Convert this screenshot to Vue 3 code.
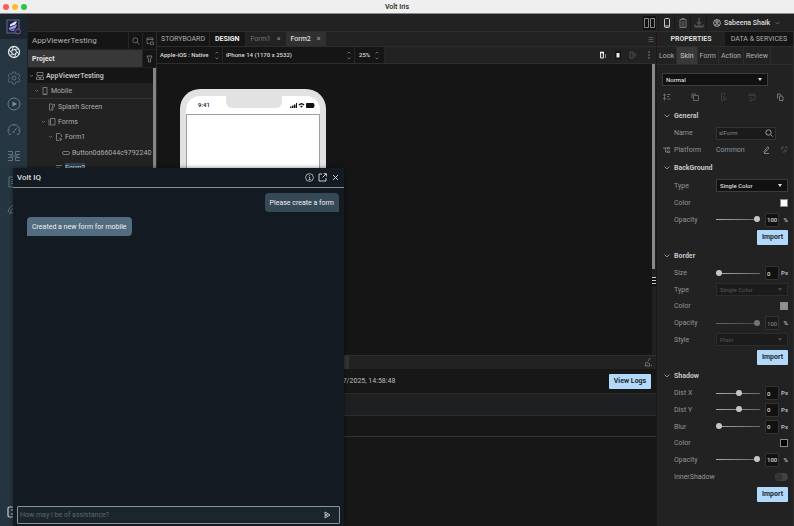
<script setup>
import { ref, reactive } from 'vue'

const railIcons = ['aperture', 'gear', 'play', 'gauge', 'flow', 'doc', 'build']

const tree = [
  { label: 'AppViewerTesting', level: 0, icon: 'app', open: true, root: true },
  { label: 'Mobile', level: 1, icon: 'phone', open: true, line: true },
  { label: 'Splash Screen', level: 2, icon: 'splash' },
  { label: 'Forms', level: 2, icon: 'forms', open: true },
  { label: 'Form1', level: 3, icon: 'form', open: true },
  { label: 'Button0d66044c9792240', level: 4, icon: 'button' },
  { label: 'Form2', level: 3, icon: 'lines', selected: true },
]

const panelTabs = ['Look', 'Skin', 'Form', 'Action', 'Review']
const activeTab = ref('Skin')

const sections = reactive([
  {
    title: 'BackGround', size: 'three', rows: [
      { label: 'Type', kind: 'select', value: 'Single Color' },
      { label: 'Color', kind: 'color', value: '#ffffff' },
      { label: 'Opacity', kind: 'range', pos: 100, value: '100', unit: '%' },
    ],
  },
  {
    title: 'Border', size: 'five', rows: [
      { label: 'Size', kind: 'range', pos: 0, value: '0', unit: 'Px' },
      { label: 'Type', kind: 'select', value: 'Single Color', disabled: true },
      { label: 'Color', kind: 'color', value: '#919191' },
      { label: 'Opacity', kind: 'range', pos: 100, value: '100', unit: '%', disabled: true },
      { label: 'Style', kind: 'select', value: 'Plain', disabled: true },
    ],
  },
  {
    title: 'Shadow', size: 'six', rows: [
      { label: 'Dist X', kind: 'range', pos: 53, value: '0', unit: 'Px' },
      { label: 'Dist Y', kind: 'range', pos: 53, value: '0', unit: 'Px' },
      { label: 'Blur', kind: 'range', pos: 0, value: '0', unit: 'Px' },
      { label: 'Color', kind: 'color', value: '#000000' },
      { label: 'Opacity', kind: 'range', pos: 100, value: '100', unit: '%' },
      { label: 'InnerShadow', kind: 'toggle', value: false },
    ],
  },
])

const skinName = ref('slForm')
const message = ref('')
</script>

<template>
  <div class="window">
    <header class="titlebar">
      <div class="lights"><i class="red"></i><i class="yellow"></i><i class="green"></i></div>
      <h1>Volt Iris</h1>
    </header>

    <div class="body">
      <nav class="rail">
        <div class="brand">
          <svg width="15" height="16" viewBox="0 0 15 16" fill="none">
            <rect x="1" y="1" width="12" height="13" fill="#1f2440" stroke="#67698f" />
            <path d="M4 5.500L9 2.500H11L9.500 5.500L4 7.500Z" fill="#e0dcff" />
            <path d="M3 9L11 5.500L9.500 9L3.500 11Z" fill="#a99cf0" />
            <path d="M4 12L9 9.500L8 12Z" fill="#7e83d8" />
            <circle cx="12" cy="12.500" r="2.500" fill="#29253c" stroke="#7a569f" />
          </svg>
        </div>
        <button v-for="icon in railIcons" :key="icon" :class="['rail-btn', icon]" type="button" :aria-label="icon">
          <svg width="14" height="14" viewBox="0 0 14 14" fill="none" stroke="currentColor">
            <template v-if="icon === 'aperture'">
              <circle cx="7" cy="7" r="5.500" stroke-width="1.300" />
              <path d="M7 4.500L9.200 5.700V8.300L7 9.500L4.800 8.300V5.700ZM7 4.500L11.500 3.800M9.200 5.700L12 9.500M9.200 8.300L7.500 12.500M7 9.500L2.500 10.200M4.800 8.300L2 4.500M4.800 5.700L6.500 1.500" />
            </template>
            <template v-else-if="icon === 'gear'">
              <circle cx="7" cy="7" r="2" />
              <path d="M5.700 1H8.300L8.700 2.700L10.200 3.400L11.600 2.500L13 5L11.700 6.300V7.700L13 9L11.600 11.500L10.200 10.600L8.700 11.300L8.300 13H5.700L5.300 11.300L3.800 10.600L2.400 11.500L1 9L2.300 7.700V6.300L1 5L2.400 2.500L3.800 3.400L5.300 2.700Z" stroke-width=".8" />
            </template>
            <template v-else-if="icon === 'play'">
              <circle cx="7" cy="7" r="6" stroke-width=".8" />
              <path d="M5.500 4.500L10 7L5.500 9.500Z" fill="currentColor" stroke="none" />
            </template>
            <template v-else-if="icon === 'gauge'">
              <path d="M3 12A6 6 0 1 1 11 12M3 12L4 10.500M11 12L10 10.500M7 8.500L10 4.500M1.500 7H3M11 7H12.500M7 1.500V3" />
              <circle cx="6.500" cy="9" r="1" fill="currentColor" stroke="none" />
            </template>
            <template v-else-if="icon === 'flow'">
              <path d="M1 2.500H5.500V5.500H1M13 2.500H8.500V5.500H13M1 11.500H5.500V8.500H1M13 11.500H8.500V8.500H13M3 7H11" />
            </template>
            <template v-else-if="icon === 'doc'">
              <path d="M2 2H10V12H2ZM4 4.500H8M4 6.500H8M4 8.500H8M11.500 4V12" />
            </template>
            <template v-else>
              <path d="M1 11C3 5 6 3 12 3M3 12C4 8 7 6 11 6M2 12H11M6 8L9 11" />
            </template>
          </svg>
        </button>
        <button class="rail-btn last" type="button" aria-label="Assistant">
          <svg width="13" height="12" viewBox="0 0 13 12" fill="none" stroke="#c5cdd3" stroke-width="1.200">
            <rect x="1" y="1" width="11" height="10" rx="1.500" /><path d="M4 4H7M4 8H7" />
          </svg>
        </button>
      </nav>

      <div class="shell">
        <div class="topbar">
          <button type="button" class="split" aria-label="Split view">
            <svg width="11" height="10" viewBox="0 0 11 10" fill="none" stroke="#a5a5a5"><path d="M.5 .5H4.500V9.500H.5ZM6.500 .5H10.500V9.500H6.500Z" stroke-width=".8" /></svg>
          </button>
          <button type="button" class="tool" aria-label="Device">
            <svg width="8" height="12" viewBox="0 0 8 12"><rect x="1.500" y="1.500" width="5" height="9" rx="1" fill="none" stroke="#c9c9c9" /><path d="M1.500 9H6.500" stroke="#c9c9c9" /></svg>
          </button>
          <button type="button" class="tool" aria-label="Tasks">
            <svg width="8" height="10" viewBox="0 0 8 10" fill="none" stroke="#888" stroke-width=".8"><path d="M1 1.500H7V9.500H1ZM2.500 .5H5.500M2.500 4H5.500M2.500 6H5.500M2.500 8H5.500" /></svg>
          </button>
          <button type="button" class="tool" aria-label="Download">
            <svg width="10" height="10" viewBox="0 0 10 10" fill="none" stroke="#656565"><path d="M5 0V6M3 4L5 6.500L7 4M1 6.500V9H9V6.500M2.500 8H7.500" /></svg>
          </button>
          <button type="button" class="user">
            <svg width="8" height="8" viewBox="0 0 8 8" fill="none" stroke="#ccc" stroke-width=".8"><circle cx="4" cy="4" r="3.400" /><circle cx="4" cy="3" r="1.200" /><path d="M2 6.500C2.300 4.500 5.700 4.500 6 6.500" /></svg>
            <span>Sabeena Shaik</span>
            <svg width="5" height="4" viewBox="0 0 5 4" fill="none" stroke="#777" stroke-width=".8"><path d="M.5 1L2.500 3L4.500 1" /></svg>
          </button>
        </div>

        <div class="workspace">
          <aside class="explorer">
            <div class="exp-row">
              <span class="app-name">AppViewerTesting</span>
              <button type="button" aria-label="Search"><svg width="8" height="8" viewBox="0 0 8 8" fill="none" stroke="#777"><circle cx="3.300" cy="3.300" r="2.500" stroke-width=".8" /><path d="M5.200 5.200L7.500 7.500" stroke-width=".8" /></svg></button>
              <button type="button" aria-label="Add panel"><svg width="8" height="8" viewBox="0 0 8 8" fill="none" stroke="#777" stroke-width=".8"><path d="M7 3.500V1H1V6.500H3.500M1 2.500H7M4.500 5H7.500V7.500H4.500Z" /></svg></button>
            </div>
            <div class="exp-row project">
              <strong>Project</strong>
              <button type="button" aria-label="Filter"><svg width="7" height="8" viewBox="0 0 7 8" fill="none" stroke="#888" stroke-width=".8"><path d="M1 1H6L4.500 4V7H2.500V4Z" /></svg></button>
            </div>
            <ul class="tree">
              <li v-for="node in tree" :key="node.label" :class="['level' + node.level, { root: node.root, line: node.line, selected: node.selected }]">
                <svg class="caret" width="5" height="4" viewBox="0 0 5 4" fill="none" stroke="#777" stroke-width=".8"><path v-if="node.open" d="M1 1L2.500 2.500L4 1" /></svg>
                <svg class="node-icon" width="8" height="8" viewBox="0 0 8 8" fill="none" stroke="#8a8a8a" stroke-width=".8">
                  <path v-if="node.icon === 'app'" d="M1 .5H7V3.500H1ZM.5 5H3.500V7.500H.5ZM4.500 5H7.500V7.500H4.500Z" />
                  <path v-else-if="node.icon === 'phone'" d="M2 .5H6V7.500H2ZM3.500 6.500H4.500" />
                  <path v-else-if="node.icon === 'splash'" d="M4 1H1.500V7H5V5.500M4 2L6.500 1V3.500L4.500 4.500V2.500M4 4.500V6" />
                  <path v-else-if="node.icon === 'forms'" d="M2.500 .5H7V7H2.500ZM1 1.500V7.500" />
                  <path v-else-if="node.icon === 'form'" d="M4 7.500H1.500V.5H5L6.500 2V4M5 5L7 6.500L5 7.500Z" />
                  <rect v-else-if="node.icon === 'button'" x=".5" y="2.500" width="7" height="3" rx="1.500" />
                  <path v-else d="M1 1.500H7M1 4H5M1 6.500H7" />
                </svg>
                <span>{{ node.label }}</span>
              </li>
            </ul>
          </aside>

          <main class="center">
            <div class="doc-tabs">
              <button type="button" class="dark">STORYBOARD</button>
              <button type="button" class="dark design">DESIGN</button>
              <button type="button" class="file">Form1 <span>×</span></button>
              <button type="button" class="file active">Form2 <span>×</span></button>
              <svg class="menu" width="6" height="7" viewBox="0 0 6 7" stroke="#555"><path d="M.5 1.500H5.500M.5 3.500H5.500M.5 5.500H5.500" /></svg>
            </div>
            <div class="device-bar">
              <button type="button" class="stepper platform"><span>Apple-iOS : Native</span><svg width="4" height="9" viewBox="0 0 4 9" fill="none" stroke="#777" stroke-width=".8"><path d="M.5 2.500L2 1L3.500 2.500M.5 6.500L2 8L3.500 6.500" /></svg></button>
              <button type="button" class="stepper device"><span>iPhone 14 (1170 x 2532)</span><svg width="4" height="9" viewBox="0 0 4 9" fill="none" stroke="#777" stroke-width=".8"><path d="M.5 2.500L2 1L3.500 2.500M.5 6.500L2 8L3.500 6.500" /></svg></button>
              <button type="button" class="stepper scale"><span>25%</span><svg width="4" height="9" viewBox="0 0 4 9" fill="none" stroke="#777" stroke-width=".8"><path d="M.5 2.500L2 1L3.500 2.500M.5 6.500L2 8L3.500 6.500" /></svg></button>
              <div class="bar-icons">
                <svg width="8" height="8" viewBox="0 0 8 8"><path d="M1.500 1.500H4.500V7H1.500Z" fill="#444" stroke="#ddd" /><path d="M1 1.500H5" stroke="#fff" stroke-width="1.500" /><path d="M6.500 3V7" stroke="#888" /></svg>
                <svg width="8" height="8" viewBox="0 0 8 8"><rect x="1" y="0" width="6" height="8" fill="#111" /><rect x="2.500" y="2" width="3" height="4.500" fill="#eee" /></svg>
                <svg width="8" height="8" viewBox="0 0 8 8" fill="none" stroke="#4d4d4d"><path d="M1 1H4V7H1ZM5 4H7.500M6 2V3M6 5V6" /></svg>
                <svg width="2" height="8" viewBox="0 0 2 8" fill="#888"><circle cx="1" cy="1" r=".8" /><circle cx="1" cy="4" r=".8" /><circle cx="1" cy="7" r=".8" /></svg>
              </div>
            </div>
            <div class="canvas">
              <div class="phone">
                <div class="screen">
                  <div class="status">
                    <span>9:41</span><i class="notch"></i>
                    <svg width="25" height="7" viewBox="0 0 25 7" fill="#111">
                      <path d="M0 4.500H1.500V6H0ZM2 3.500H3.500V6H2ZM4 2.500H5.500V6H4ZM6 1H7V6H6Z" />
                      <path d="M8.500 2.500C10.500 .5 12.500 .5 14.500 2.500L13.600 3.400C12.200 2.200 10.800 2.200 9.400 3.400ZM10.200 4.200C11 3.600 12 3.600 12.800 4.200L11.500 5.800Z" />
                      <rect x="16" y="1" width="8" height="5" rx="1" /><path d="M24.400 2.500V4.500" stroke="#111" stroke-width=".6" />
                    </svg>
                  </div>
                  <div class="form-area"></div>
                </div>
              </div>
              <div class="scroll"><i class="thumb"></i><i class="grip"></i></div>
            </div>
            <div class="console-bar">
              <i></i>
              <svg width="9" height="9" viewBox="0 0 9 9" fill="none" stroke="#777" stroke-width=".8"><path d="M6 0L4 3.500M2 4L6 6M2 4L1 8H6L5.500 6M3 6.500V8M7.500 7V8" /></svg>
            </div>
            <div class="log"><span>08/07/2025, 14:58:48</span><button type="button" class="blue">View Logs</button></div>
            <div class="log-head"></div>
            <div class="log-line"></div>
          </main>

          <aside class="props">
            <div class="main-tabs"><button type="button" class="on">PROPERTIES</button><button type="button">DATA &amp; SERVICES</button></div>
            <div class="sub-tabs">
              <button v-for="t in panelTabs" :key="t" type="button" :class="{ on: t === activeTab }" @click="activeTab = t">{{ t }}</button>
            </div>
            <label class="select state"><select aria-label="State"><option>Normal</option></select></label>
            <div class="skin-tools">
              <svg width="8" height="8" viewBox="0 0 8 8" fill="none" stroke="#777" stroke-width=".8"><path d="M1.500 .5V7.500M0 2H3M0 5.500H3M4 1.500H7.500M4 3.500H6M4 6H7.500" /></svg>
              <svg width="8" height="8" viewBox="0 0 8 8" fill="none" stroke="#777" stroke-width=".8"><path d="M2.500 2.500H7.500V7.500H2.500ZM1 5V1H5" /></svg>
              <svg width="8" height="8" viewBox="0 0 8 8" fill="none" stroke="#444" stroke-width=".8"><path d="M3 7.500H1.500V.5H4.500V2.500M3.500 3.500L6.500 6L4 7.500Z" /></svg>
              <svg width="8" height="8" viewBox="0 0 8 8" fill="none" stroke="#444" stroke-width=".8"><path d="M1 3.500V1H7V7H5M1 2.500H7M1 5H4V7.500H1" /></svg>
              <svg width="8" height="8" viewBox="0 0 8 8" fill="none" stroke="#888" stroke-width=".8"><path d="M1.500 5.500V1H4L5.500 2.500M3.500 3H6L7 4V7.500H3.500Z" /></svg>
            </div>

            <section>
              <h2><svg width="6" height="4" viewBox="0 0 6 4" fill="none" stroke="#aaa" stroke-width=".8"><path d="M.5 .5L3 3L5.500 .5" /></svg>General</h2>
              <div class="rows two">
                <div class="row">
                  <label class="name" for="skin-name">Name</label>
                  <div class="name-box"><input id="skin-name" v-model="skinName" type="text" /><svg width="8" height="8" viewBox="0 0 8 8" fill="none" stroke="#aaa" stroke-width=".9"><circle cx="3.500" cy="3.500" r="2.700" /><path d="M5.500 5.500L7.600 7.600" /></svg></div>
                </div>
                <div class="row">
                  <svg class="fork" width="7" height="6" viewBox="0 0 7 6" fill="none" stroke="#888" stroke-width=".8"><path d="M0 1H2.500V5H4M2.500 1H4M4.500 .5H6.500V2H4.500ZM4.500 4H6.500V5.500H4.500Z" /></svg>
                  <span class="name">Platform</span>
                  <a class="common" href="#">Common</a>
                  <span class="edit">
                    <svg width="7" height="8" viewBox="0 0 7 8" fill="none" stroke="#999" stroke-width=".8"><path d="M1 5.500L4.500 .8L6 2L2.500 6L1 6.500ZM1 7.500H6" /></svg>
                    <svg width="7" height="7" viewBox="0 0 7 7" fill="none" stroke="#5a5a5a" stroke-width=".8"><path d="M3 1H1V4M4 1H6V3M6 4L4 6H1.500M3 3.500L5 5" /></svg>
                  </span>
                </div>
              </div>
            </section>

            <section v-for="s in sections" :key="s.title">
              <h2><svg width="6" height="4" viewBox="0 0 6 4" fill="none" stroke="#aaa" stroke-width=".8"><path d="M.5 .5L3 3L5.500 .5" /></svg>{{ s.title }}</h2>
              <div :class="['rows', s.size]">
                <div v-for="r in s.rows" :key="r.label" :class="['row', { off: r.disabled }]">
                  <label class="name" :for="s.title + r.label">{{ r.label }}</label>
                  <div v-if="r.kind === 'select'" class="select"><select :id="s.title + r.label" :disabled="r.disabled"><option>{{ r.value }}</option></select></div>
                  <button v-else-if="r.kind === 'color'" :id="s.title + r.label" type="button" class="swatch" :style="{ background: r.value }"></button>
                  <template v-else-if="r.kind === 'range'">
                    <input :id="s.title + r.label" v-model="r.pos" class="range" type="range" min="0" max="100" :disabled="r.disabled" />
                    <input v-model="r.value" class="num" type="text" :aria-label="r.label + ' value'" :disabled="r.disabled" />
                    <span class="unit">{{ r.unit }}</span>
                  </template>
                  <input v-else :id="s.title + r.label" v-model="r.value" class="toggle" type="checkbox" />
                </div>
              </div>
              <div class="import"><button type="button" class="blue">Import</button></div>
            </section>
          </aside>
        </div>
      </div>
    </div>

    <div class="chat">
      <header>
        <h2>Volt IQ</h2>
        <button type="button" aria-label="Info"><svg width="9" height="9" viewBox="0 0 9 9" fill="none" stroke="#ccc" stroke-width=".8"><circle cx="4.500" cy="4.500" r="3.900" /><path d="M3.700 4H4.700V6.500M3.500 6.600H5.700M4.500 2V3" /></svg></button>
        <button type="button" aria-label="Open in window"><svg width="9" height="9" viewBox="0 0 9 9" fill="none" stroke="#ddd" stroke-width=".9"><path d="M4 1H1V8H8V5M5.500 .7H8.400V3.500M8.200 .8L4.500 4.500" /></svg></button>
        <button type="button" aria-label="Close"><svg width="7" height="7" viewBox="0 0 7 7" stroke="#ddd" stroke-width=".9"><path d="M1 1L6 6M6 1L1 6" /></svg></button>
      </header>
      <div class="messages">
        <p class="mine">Please create a form</p>
        <p class="theirs">Created a new form for mobile</p>
      </div>
      <form class="ask" @submit.prevent="message = ''">
        <input v-model="message" type="text" placeholder="How may I be of assistance?" aria-label="Message" />
        <button type="submit" aria-label="Send"><svg width="7" height="8" viewBox="0 0 7 8" fill="none" stroke="#ccc" stroke-width=".9"><path d="M1 1L6 4L1 7V4.500L3.500 4L1 3.500Z" /></svg></button>
      </form>
    </div>
  </div>
</template>

<style>
body { background: #171717; }
</style>

<style scoped>
* { box-sizing: border-box; }
.window { position: relative; height: 100vh; display: flex; flex-direction: column; overflow: hidden; background: #222; color: #adadad; font: 7px/10px Roboto, "Liberation Sans", sans-serif; }
button, input, select { font: inherit; color: inherit; margin: 0; padding: 0; border: 0; border-radius: 0; background: none; min-width: 0; outline: 0; }
button { display: flex; align-items: center; justify-content: center; white-space: nowrap; }
svg { display: block; flex: none; }
h1, h2, p, ul { margin: 0; padding: 0; font-size: inherit; }

.titlebar { flex: none; height: 14px; display: grid; grid-template-columns: 1fr auto 1fr; align-items: center; background: #efefef; border-bottom: 1px solid #8b8b8b; }
.titlebar h1 { color: #222; font-weight: 500; }
.lights { display: flex; gap: 3px; padding-left: 3px; }
.lights i { width: 6px; height: 6px; border-radius: 50%; }
.red { background: #fc5b57; }
.yellow { background: #fdbb2d; }
.green { background: #28c840; }

.body { flex: 1; min-height: 0; display: flex; }
.rail { width: 28px; flex: none; display: flex; flex-direction: column; background: #263641; border-right: 1px solid #1b242b; }
.brand { height: 25px; display: grid; place-items: center; background: #1b262e; }
.rail-btn { height: 26px; color: #5c7484; }
.rail-btn.aperture { color: #e3e8eb; }
.rail-btn.play { color: #7892a3; }
.rail-btn.last { margin-top: auto; height: 28px; }

.shell { flex: 1; min-width: 0; display: flex; flex-direction: column; }
.topbar { flex: none; height: 18px; display: flex; justify-content: flex-end; border-bottom: 1px solid #2d2d2d; }
.split { width: 13px; background: #111; margin: 2px 2px 1px 0; }
.tool { width: 16px; border-left: 1px solid #171717; }
.user { gap: 3px; width: 88px; padding-left: 6px; justify-content: flex-start; border-left: 1px solid #171717; color: #ddd; font-weight: 500; }
.user span { margin-right: 2px; }

.workspace { flex: 1; min-height: 0; display: flex; }
.explorer { width: 128px; flex: none; background: #222; }
.exp-row { height: 18px; display: flex; background: #151515; border-bottom: 1px solid #222; }
.exp-row button { width: 14px; border-left: 1px solid #262626; }
.app-name { flex: 1; padding: 4px 4px; font-size: 8px; color: #b0b0b0; }
.project strong { flex: 1; padding: 4px 4px; background: #383838; color: #e5e5e5; }
.tree { list-style: none; height: 108px; display: grid; grid-auto-rows: 1fr; border-right: 3px solid #868686; overflow: hidden; }
.tree li { display: flex; align-items: center; gap: 2px; white-space: nowrap; }
.tree li.root { background: #151515; color: #bbb; font-weight: 700; }
.tree li.line { border-bottom: 1px solid #333; }
.level0 { padding-left: 1px; }
.level1 { padding-left: 6px; }
.level2 { padding-left: 13px; }
.level3 { padding-left: 20px; }
.level4 { padding-left: 27px; }
.selected span { background: #2c4252; color: #ddd; }

.center { flex: 1; min-width: 0; display: flex; flex-direction: column; background: #171717; border-left: 1px solid #2b2b2b; }
.center > * { flex: none; }
.doc-tabs { height: 15px; display: flex; align-items: center; background: #222; border-bottom: 1px solid #2d2d2d; }
.doc-tabs button { align-self: stretch; padding: 0 4px; }
.doc-tabs .dark { background: #151515; border-right: 1px solid #262626; }
.doc-tabs .design { padding: 0 5px; color: #eee; font-weight: 700; }
.file { gap: 6px; color: #777; }
.file span { color: #999; }
.doc-tabs .file { padding: 0 5px; }
.doc-tabs .active { background: #303030; color: #ddd; font-weight: 500; }
.menu { margin-left: auto; margin-right: 2px; }
.device-bar { height: 17px; display: flex; align-items: center; background: #222; border-bottom: 1px solid #2d2d2d; }
.stepper { align-self: stretch; justify-content: space-between; padding: 0 3px 0 3px; background: #151515; border-right: 1px solid #262626; color: #ddd; font-size: 6px; font-weight: 500; }
.platform { width: 66px; }
.device { width: 132px; }
.scale { width: 30px; padding-right: 5px; padding-left: 4px; }
.bar-icons { margin-left: auto; margin-right: 6px; display: flex; gap: 7px; }
.bar-icons svg:last-child { margin-left: 4px; }
.canvas { height: 291px; display: flex; justify-content: space-between; overflow: hidden; background: #151515; }
.phone { width: 146px; height: 284px; margin: 25px 0 0 23px; padding: 7px 6px; border-radius: 20px; background: #e2e2e2; }
.screen { display: flex; flex-direction: column; height: 100%; border-radius: 14px; background: #fff; overflow: hidden; }
.status { height: 18px; display: flex; align-items: center; justify-content: space-between; padding: 0 5px 0 12px; color: #111; font-size: 6px; }
.status span { width: 20px; font-weight: 500; }
.notch { width: 56px; height: 12px; align-self: flex-start; border-radius: 0 0 6px 6px; background: #e2e2e2; }
.form-area { flex: 1; border: 1px solid #9aa0a8; }
.scroll { width: 4px; background: #202020; }
.scroll i { display: block; }
.thumb { height: 205px; border-left: 3px solid #898989; }
.grip { height: 9px; margin-top: 8px; background: repeating-linear-gradient(#ccc 0 1px, #111 1px 3px); }
.console-bar { height: 14px; display: flex; align-items: center; justify-content: space-between; padding-right: 3px; background: #222; border-top: 1px solid #303030; }
.console-bar i { width: 192px; height: 13px; background: #343434; }
.log { height: 25px; display: flex; align-items: center; justify-content: space-between; padding: 0 5px 0 171px; border-bottom: 1px solid #2b2b2b; color: #bbb; }
.blue { height: 15px; background: #b3d9fa; color: #1b2731; font-weight: 700; border-radius: 1px; }
.log .blue { width: 42px; }
.log-head { height: 22px; background: #1e1f21; border-bottom: 1px solid #2d2d2d; }
.log-line { height: 21px; border-bottom: 1px solid #333; }

.props { width: 138px; flex: none; border-left: 1px solid #1b1b1b; border-right: 1px solid #2d2d2d; background: #222; }
.main-tabs { height: 15px; display: grid; grid-template-columns: 1fr 1fr; }
.main-tabs button { background: #151515; border-bottom: 1px solid #2d2d2d; }
.main-tabs .on { background: #222; color: #ddd; font-weight: 700; }
.sub-tabs { height: 18px; display: flex; border-bottom: 1px solid #2d2d2d; }
.sub-tabs button { padding: 0 2px; border-right: 1px solid #2d2d2d; }
.sub-tabs .on { padding: 0 3px; background: #383838; color: #ccc; }
.select { position: relative; display: flex; flex: 1; height: 13px; border: 1px solid #3c3c3c; background: #111; color: #ddd; font-size: 6px; font-weight: 500; }
.select select { appearance: none; width: 100%; padding-left: 3px; }
.select select:disabled { opacity: 1; }
.select::after { content: ""; position: absolute; right: 5px; top: 4px; border: 2px solid transparent; border-top: 3px solid currentColor; pointer-events: none; }
.off .select { background: #1b1b1b; border-color: #2c2c2c; color: #4d4d4d; }
.state { margin: 8px 25px 0 5px; }
.skin-tools { display: flex; justify-content: space-between; padding: 7px 9px 4px 6px; }
.props section:first-of-type { margin-top: 1px; }
.props h2 { height: 19px; display: flex; align-items: center; gap: 4px; padding-left: 7px; color: #c4c4c4; font-weight: 700; }
.rows { display: grid; grid-auto-rows: 1fr; padding: 0 5px 0 17px; }
.two { height: 33px; }
.three { height: 51px; }
.five { height: 83px; }
.six { height: 100px; }
.row { position: relative; display: flex; align-items: center; }
.name { width: 42px; flex: none; color: #949494; white-space: nowrap; }
.name-box { width: 60px; height: 13px; display: flex; align-items: center; padding: 0 2px; border: 1px solid #333; background: #1b1b1b; color: #858585; font-size: 6px; }
.name-box input { flex: 1; }
.fork { position: absolute; left: -11px; }
.common { color: #8599a9; text-decoration: none; }
.edit { display: flex; gap: 11px; margin-left: auto; }
.swatch { width: 8px; height: 8px; margin-left: auto; border: 1px solid #888; }
.range { appearance: none; width: 44px; height: 7px; }
.range::-webkit-slider-runnable-track { height: 1px; background: linear-gradient(90deg, #aaa, #666); }
.range::-webkit-slider-thumb { appearance: none; width: 6px; height: 6px; margin-top: -3px; border-radius: 50%; background: #c6c6c6; }
.off .range { opacity: .5; }
.num { width: 14px; height: 14px; margin-left: 5px; padding-left: 1px; border: 1px solid #333; border-radius: 1px; background: #111; color: #ddd; font-size: 6px; font-weight: 500; }
.num:disabled { background: #1b1b1b; color: #777; }
.unit { margin-left: auto; font-size: 6px; font-weight: 700; color: #b5b5b5; }
.toggle { appearance: none; width: 13px; height: 8px; margin-left: auto; border-radius: 4px; background: radial-gradient(circle at 4px 4px, #333 3px, #414141 4px); }
.import { height: 18px; display: flex; justify-content: flex-end; align-items: center; padding-right: 5px; }
.import .blue { width: 31px; }

.chat { position: absolute; left: 13px; top: 168px; bottom: 0; width: 331px; display: flex; flex-direction: column; background: #141a21; box-shadow: 0 0 4px #0008; }
.chat header { height: 20px; flex: none; display: flex; align-items: center; gap: 4px; padding: 0 4px; border-bottom: 1px solid #8b8f92; }
.chat h2 { flex: 1; font-size: 8px; font-weight: 500; color: #ddd; }
.chat header button { width: 9px; height: 9px; }
.messages { flex: 1; display: flex; flex-direction: column; gap: 5px; padding: 5px 5px 0 14px; }
.messages p { height: 19px; padding: 0 5px; display: flex; align-items: center; color: #f0f0f0; white-space: nowrap; }
.mine { align-self: flex-end; background: #364957; border-radius: 4px 4px 0 4px; }
.theirs { align-self: flex-start; background: #526c80; border-radius: 4px 4px 4px 0; }
.ask { height: 18px; display: flex; margin: 0 4px 2px; padding: 0 8px 0 2px; border: 1px solid #8b9296; border-radius: 1px; background: #1b252e; color: #ccc; }
.ask input { flex: 1; }
.ask input::placeholder { color: #5b656d; opacity: 1; }
</style>
